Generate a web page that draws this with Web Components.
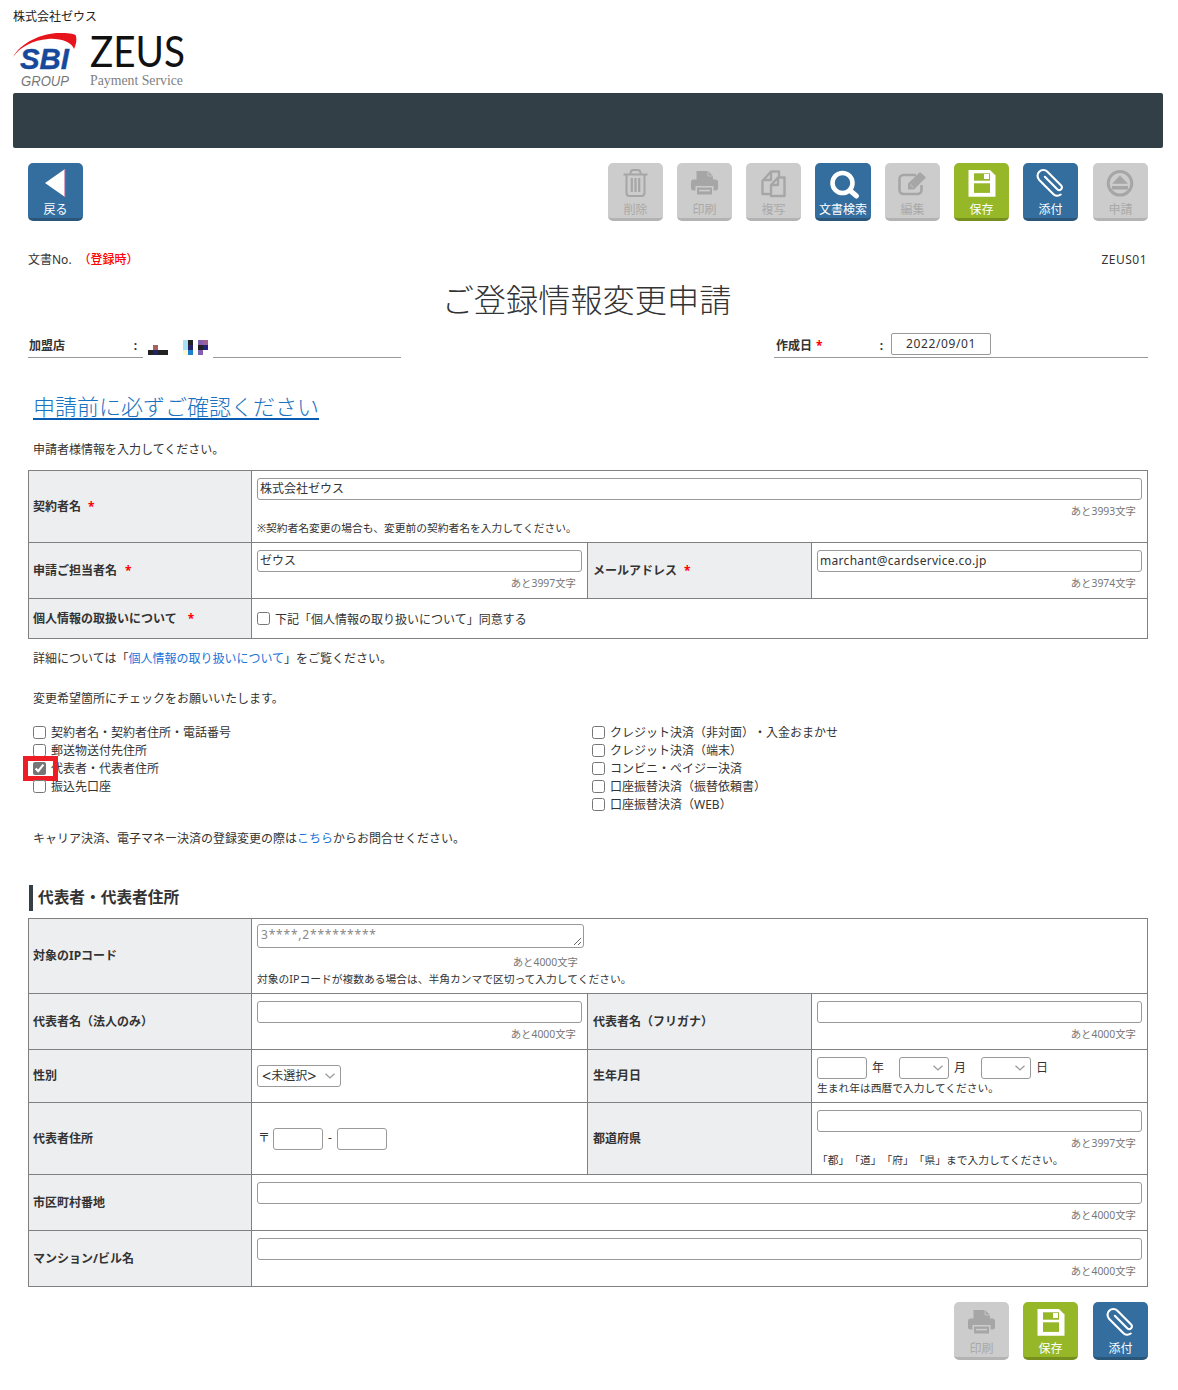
<!DOCTYPE html>
<html lang="ja">
<head>
<meta charset="utf-8">
<title>ご登録情報変更申請</title>
<style>
html,body{margin:0;padding:0;background:#fff}
body{font:12px/20px "Noto Sans","Noto Sans CJK JP",sans-serif;color:#333;width:1178px;overflow-x:hidden;text-spacing-trim:space-all}
a{color:#1a73d8;text-decoration:none}
.big{font-size:16px}
</style>
</head>
<body>
<z-header>株式会社ゼウス</z-header>

<z-toolbar style="margin-top:15px">
  <z-btn slot="start" icon="back" tone="blue">戻る</z-btn>
  <z-btn icon="trash">削除</z-btn>
  <z-btn icon="print">印刷</z-btn>
  <z-btn icon="copy">複写</z-btn>
  <z-btn icon="search" tone="blue" wide>文書検索</z-btn>
  <z-btn icon="edit">編集</z-btn>
  <z-btn icon="save" tone="green">保存</z-btn>
  <z-btn icon="clip" tone="blue">添付</z-btn>
  <z-btn icon="eject" nudge>申請</z-btn>
</z-toolbar>

<z-docmeta><span slot="no">文書No.</span><span slot="status">（登録時）</span><span slot="code">ZEUS01</span></z-docmeta>
<z-title>ご登録情報変更申請</z-title>
<z-meta><span slot="shop">加盟店</span><span slot="date">作成日</span><span slot="value">2022/09/01</span></z-meta>

<z-bigl>申請前に必ずご確認ください</z-bigl>
<z-p top="19">申請者様情報を入力してください。</z-p>

<z-table style="margin-top:11px">
  <z-row h="72">
    <z-th>契約者名<z-req gap="7"></z-req></z-th>
    <z-td span>
      <z-in>株式会社ゼウス</z-in>
      <z-count>あと3993文字</z-count>
      <z-note style="margin-top:3px">※契約者名変更の場合も、変更前の契約者名を入力してください。</z-note>
    </z-td>
  </z-row>
  <z-row h="56">
    <z-th>申請ご担当者名<z-req gap="8"></z-req></z-th>
    <z-td><z-in>ゼウス</z-in><z-count>あと3997文字</z-count></z-td>
    <z-th>メールアドレス<z-req gap="7"></z-req></z-th>
    <z-td><z-in style="letter-spacing:.3px">marchant@cardservice.co.jp</z-in><z-count>あと3974文字</z-count></z-td>
  </z-row>
  <z-row h="40" last>
    <z-th>個人情報の取扱いについて<z-req gap="11"></z-req></z-th>
    <z-td span center><z-check>下記「個人情報の取り扱いについて」同意する</z-check></z-td>
  </z-row>
</z-table>

<z-p top="9">詳細については「<a href="#">個人情報の取り扱いについて</a>」をご覧ください。</z-p>
<z-p top="20">変更希望箇所にチェックをお願いいたします。</z-p>

<z-checks>
  <z-check>契約者名・契約者住所・電話番号</z-check>
  <z-check>郵送物送付先住所</z-check>
  <z-check checked mark>代表者・代表者住所</z-check>
  <z-check>振込先口座</z-check>
  <z-check slot="right">クレジット決済（非対面）・入金おまかせ</z-check>
  <z-check slot="right">クレジット決済（端末）</z-check>
  <z-check slot="right">コンビニ・ペイジー決済</z-check>
  <z-check slot="right">口座振替決済（振替依頼書）</z-check>
  <z-check slot="right">口座振替決済（WEB）</z-check>
</z-checks>

<z-p top="15">キャリア決済、電子マネー決済の登録変更の際は<a href="#">こちら</a>からお問合せください。</z-p>

<z-heading>代表者・代表者住所</z-heading>

<z-table style="margin-top:7px">
  <z-row h="75">
    <z-th>対象のIPコード</z-th>
    <z-td span tight>
      <z-area>3****,2*********</z-area>
      <z-count style="width:327px;margin-top:7px">あと4000文字</z-count>
      <z-note style="margin-top:3px">対象のIPコードが複数ある場合は、半角カンマで区切って入力してください。</z-note>
    </z-td>
  </z-row>
  <z-row h="56">
    <z-th>代表者名（法人のみ）</z-th>
    <z-td><z-in></z-in><z-count>あと4000文字</z-count></z-td>
    <z-th>代表者名（フリガナ）</z-th>
    <z-td><z-in></z-in><z-count>あと4000文字</z-count></z-td>
  </z-row>
  <z-row h="53">
    <z-th>性別</z-th>
    <z-td center><z-sel w="84"><span class="big">&lt;</span>未選択<span class="big">&gt;</span></z-sel></z-td>
    <z-th>生年月日</z-th>
    <z-td>
      <z-inline>
        <z-in w="50"></z-in><z-unit after="15">年</z-unit>
        <z-sel w="50"></z-sel><z-unit after="15">月</z-unit>
        <z-sel w="50"></z-sel><z-unit>日</z-unit>
      </z-inline>
      <z-note style="margin-top:2px">生まれ年は西暦で入力してください。</z-note>
    </z-td>
  </z-row>
  <z-row h="72">
    <z-th>代表者住所</z-th>
    <z-td center>
      <z-inline>
        <z-unit first after="3">〒</z-unit><z-in w="50"></z-in><z-unit after="5">-</z-unit><z-in w="50"></z-in>
      </z-inline>
    </z-td>
    <z-th>都道府県</z-th>
    <z-td>
      <z-in></z-in><z-count>あと3997文字</z-count>
      <z-note style="margin-top:3px">「都」「道」「府」「県」まで入力してください。</z-note>
    </z-td>
  </z-row>
  <z-row h="56">
    <z-th>市区町村番地</z-th>
    <z-td span><z-in></z-in><z-count>あと4000文字</z-count></z-td>
  </z-row>
  <z-row h="56" last>
    <z-th>マンション/ビル名</z-th>
    <z-td span><z-in></z-in><z-count>あと4000文字</z-count></z-td>
  </z-row>
</z-table>

<z-toolbar style="margin-top:15px">
  <z-btn icon="print">印刷</z-btn>
  <z-btn icon="save" tone="green">保存</z-btn>
  <z-btn icon="clip" tone="blue" nudge>添付</z-btn>
</z-toolbar>

<script>
const el=(name,css,html)=>customElements.define(name,class extends HTMLElement{
  constructor(){super();this.attachShadow({mode:'open'}).innerHTML='<style>'+css+'</style>'+html;}
});

el('z-header',`
  :host{display:block;padding:0 15px 0 13px}
  .n{height:32px;line-height:33px;font-size:12px;color:#222}
  svg{display:block;margin-top:1px;overflow:visible}
  .bar{height:55px;background:#333f46;border-radius:2px}
`,`
  <div class="n"><slot></slot></div>
  <svg width="180" height="60" viewBox="13 33 180 60">
    <path d="M13 57C21 42 44 32 62 33C70 33 76 34 76 36C77 40 76 45 74 49C72 42 60 38 48 39C33 40 20 47 13 57Z" fill="#e8141c"/>
    <text x="20" y="69" font-family="Liberation Sans" font-weight="700" font-style="italic" font-size="30" fill="#16499b" stroke="#16499b" stroke-width=".4" textLength="49" lengthAdjust="spacingAndGlyphs">SBI</text>
    <text x="21" y="86" font-family="Liberation Sans" font-style="italic" font-size="15" fill="#777" textLength="48" lengthAdjust="spacingAndGlyphs">GROUP</text>
    <text x="90" y="67" font-family="Lato" font-size="43" fill="#111" textLength="95" lengthAdjust="spacingAndGlyphs">ZEUS</text>
    <text x="90" y="85" font-family="Liberation Serif" font-size="14.5" fill="#808080" textLength="93" lengthAdjust="spacingAndGlyphs">Payment Service</text>
  </svg>
  <div class="bar"></div>
`);

el('z-toolbar',`
  :host{display:flex;justify-content:space-between;padding:0 30px 0 28px}
  .r{display:flex;gap:14px;margin-left:auto}
`,`<slot name="start"></slot><div class="r"><slot></slot></div>`);

const ICONS={
 back:`<polygon points="17,20 37,6 37,34" fill="#fff"/><rect x="36.4" y="6" width="1" height="28" fill="#b5649a"/>`,
 trash:`<g fill="none" stroke="#a6a6a6" stroke-width="2"><path d="M15.5 11.5H39.5" stroke-width="2.2"/><path d="M22.5 11V9.5A3 3 0 0 1 25.5 7H29.5A3 3 0 0 1 32.5 9.5V11"/><path d="M18.5 12V30A3 3 0 0 0 21.5 33H33.5A3 3 0 0 0 36.5 30V12"/></g><g fill="#a6a6a6"><rect x="22.7" y="15" width="2.2" height="14"/><rect x="26.4" y="15" width="2.2" height="14"/><rect x="30.1" y="15" width="2.2" height="14"/></g>`,
 print:`<path d="M19.5 8H31L36 13V18H19.5Z" fill="#a6a6a6"/><path d="M31 8V13H36" fill="none" stroke="#ccc" stroke-width=".8"/><rect x="14" y="16.5" width="27" height="11" rx="2.5" fill="#a6a6a6"/><rect x="18.5" y="23" width="18" height="8.5" fill="#ccc"/><rect x="20" y="24.5" width="15" height="7" fill="#a6a6a6"/><rect x="22" y="26.8" width="11" height="1.6" fill="#ccc"/>`,
 copy:`<g fill="none" stroke="#a6a6a6" stroke-width="2.4" stroke-linejoin="round"><path d="M24 31H16.5V18L25 8.5H33V14"/><path d="M25 9V17H17"/><path d="M32 14.5H38.5V33H25V22L32 14.5Z"/><path d="M32 15V22H25.5"/></g>`,
 search:`<circle cx="26.5" cy="20" r="10" fill="none" stroke="#fff" stroke-width="4.6"/><path d="M34 27.5L40.5 33" stroke="#fff" stroke-width="5" stroke-linecap="round"/>`,
 edit:`<path d="M31 12H18.5A4 4 0 0 0 14.5 16V27A4 4 0 0 0 18.5 31H32.5A4 4 0 0 0 36.5 27V22" fill="none" stroke="#a6a6a6" stroke-width="2.6"/><path d="M23 20.5L35 9L41 14.5L29 26.5H23Z" fill="#a6a6a6"/><path d="M25.2 21.6L28.2 24.4" stroke="#ccc" stroke-width="1"/>`,
 save:`<path d="M14.5 7H36L41.5 12.5V33.7H14.5Z" fill="#fff"/><rect x="20" y="10.3" width="16" height="7.4" fill="#95b728"/><rect x="30" y="11" width="5" height="5" fill="#fff"/><rect x="20" y="20.3" width="16" height="9.6" fill="#95b728"/>`,
 clip:`<g transform="translate(27.8 20.3) rotate(-45) scale(.88) translate(0 -1)" fill="none" stroke="#fff" stroke-width="2.4" stroke-linecap="round"><path d="M.4 -9V11A3.1 3.1 0 0 0 6.6 11V-11A6.6 6.6 0 0 0 -6.6 -11V11.5A6.6 6.6 0 0 0 -1 18"/></g>`,
 eject:`<circle cx="27" cy="20.3" r="11.8" fill="none" stroke="#a6a6a6" stroke-width="3"/><polygon points="27,12.5 19,20.8 35,20.8" fill="#a6a6a6"/><rect x="19" y="23" width="16" height="3.5" fill="#a6a6a6"/>`
};
customElements.define('z-btn',class extends HTMLElement{
  constructor(){super();this.attachShadow({mode:'open'});}
  connectedCallback(){
    const i=this.getAttribute('icon');
    this.shadowRoot.innerHTML=`<style>
      :host{display:flex;flex-direction:column;align-items:center;box-sizing:border-box;width:55px;height:58px;border-radius:5px;
        background:#ccc;border-bottom:3px solid #b3b3b3;color:#a9a9a9;overflow:hidden;font-size:12px;line-height:14px}
      :host([tone=blue]){background:#346e9f;border-bottom-color:#2a5679;color:#fff}
      :host([tone=green]){background:#95b728;border-bottom-color:#75901e;color:#fff}
      :host([wide]){width:56px}
      :host([nudge]){margin-left:1px}
      svg{display:block;flex:none}
      .t{white-space:nowrap}
    </style><svg width="55" height="40" viewBox="0 0 55 40">${ICONS[i]}</svg><span class="t"><slot></slot></span>`;
  }
});

el('z-docmeta',`
  :host{display:flex;justify-content:space-between;padding:0 31px 0 28px;margin-top:29px;height:20px;line-height:20px;font-size:12px}
  .s{color:#f00;font-weight:500;margin-left:7px}
  .c{letter-spacing:.5px}
`,`<div><slot name="no"></slot><span class="s"><slot name="status"></slot></span></div><span class="c"><slot name="code"></slot></span>`);

el('z-title',`
  :host{display:block;margin:6px 33px 0 28px;height:44px;line-height:44px;text-align:center;font-size:32.2px;font-weight:300;color:#333;font-family:"Noto Sans CJK JP",sans-serif}
`,`<slot></slot>`);

el('z-meta',`
  :host{display:flex;justify-content:space-between;align-items:flex-end;margin:13px 30px 0 28px;height:25px;font-size:12px}
  .l{display:flex;align-items:flex-end}
  .u{box-sizing:border-box;border-bottom:1px solid #999;height:25px;display:flex;align-items:flex-end;justify-content:space-between;line-height:22px;font-weight:700;padding-left:1px}
  .c{padding-right:6px}
  svg{display:block;margin:0 5px 3px}
  .req{color:#f00;margin-left:4px}
  .box{box-sizing:border-box;width:100px;height:22px;border:1px solid #999;border-radius:2px;margin-bottom:2px;line-height:20px;text-align:center;font-weight:400;letter-spacing:.6px}
  .d{width:374px}
  .d .c{padding:0}
`,`
  <div class="l">
    <div class="u" style="width:115px"><span><slot name="shop"></slot></span><span class="c">:</span></div>
    <svg width="60" height="15" viewBox="0 0 60 15" shape-rendering="crispEdges">
      <rect x="5" y="5" width="5" height="5" fill="#a86060"/><rect x="0" y="10" width="20" height="5" fill="#222"/><rect x="5" y="10" width="5" height="5" fill="#222266"/>
      <rect x="35" y="0" width="5" height="10" fill="#a8e0f8"/><rect x="35" y="10" width="5" height="5" fill="#fdf8d0"/>
      <rect x="40" y="0" width="5" height="5" fill="#222"/><rect x="40" y="5" width="5" height="5" fill="#222266"/><rect x="40" y="10" width="5" height="5" fill="#1c80d0"/>
      <rect x="50" y="0" width="5" height="5" fill="#8060b0"/><rect x="50" y="5" width="5" height="5" fill="#222"/><rect x="50" y="10" width="5" height="5" fill="#8060b0"/>
      <rect x="55" y="0" width="5" height="5" fill="#a06090"/><rect x="55" y="5" width="5" height="5" fill="#202080"/>
    </svg>
    <div class="u" style="width:188px"></div>
  </div>
  <div class="u d">
    <span style="padding-left:1px"><slot name="date"></slot><span class="req">*</span></span>
    <span style="display:flex;align-items:flex-end;gap:8px"><span class="c">:</span><span class="box"><slot name="value"></slot></span><span style="width:149px"></span></span>
  </div>
`);

el('z-bigl',`
  :host{display:block;margin:32px 0 0 33px;height:30px;line-height:30px;font-size:22px;color:#1a73c0;font-weight:300;font-family:"Noto Sans CJK JP",sans-serif}
  a{color:inherit;text-decoration:none;border-bottom:2px solid #0a5cb0;display:inline-block;line-height:26px}
`,`<a href="#"><slot></slot></a>`);

customElements.define('z-p',class extends HTMLElement{
  constructor(){super();this.attachShadow({mode:'open'}).innerHTML=`<style>
    :host{display:block;padding-left:33px;height:20px;line-height:22px;font-size:12px;color:#333}
  </style><slot></slot>`;}
  connectedCallback(){this.style.marginTop=(this.getAttribute('top')||0)+'px';}
});

el('z-table',`
  :host{display:block;margin-left:28px;width:1120px;box-sizing:border-box;border:1px solid #808080;border-bottom:0}
`,`<slot></slot>`);

customElements.define('z-row',class extends HTMLElement{
  constructor(){super();this.attachShadow({mode:'open'}).innerHTML=`<style>
    :host{display:grid;grid-template-columns:223px 336px 224px 1fr;box-sizing:border-box;border-bottom:1px solid #808080}
  </style><slot></slot>`;}
  connectedCallback(){this.style.height=this.getAttribute('h')+'px';}
});

el('z-th',`
  :host{display:flex;align-items:center;box-sizing:border-box;background:#edeef0;border-right:1px solid #808080;padding-left:4px;font-weight:700;font-size:12px;color:#333;white-space:nowrap}
  :host(:nth-child(3)){padding-left:5px}
`,`<slot></slot>`);

el('z-td',`
  :host{display:flex;flex-direction:column;box-sizing:border-box;border-right:1px solid #808080;padding:7px 5px 0;min-width:0}
  :host(:last-child){border-right:0}
  :host([span]){grid-column:span 3}
  :host([tight]){padding-top:5px}
  :host([center]){justify-content:center;padding-top:0}
`,`<slot></slot>`);

customElements.define('z-req',class extends HTMLElement{
  constructor(){super();this.attachShadow({mode:'open'}).innerHTML=`<style>
    :host{display:inline;color:#f00;font-weight:700}
  </style>*`;}
  connectedCallback(){this.style.marginLeft=this.getAttribute('gap')+'px';}
});

customElements.define('z-in',class extends HTMLElement{
  constructor(){super();this.attachShadow({mode:'open'}).innerHTML=`<style>
    :host{display:block;box-sizing:border-box;height:22px;flex:none;border:1px solid #999;border-radius:3px;padding-left:2px;line-height:20px;font-size:12px;color:#333;background:#fff;white-space:nowrap;overflow:hidden}
  </style><slot></slot>`;}
  connectedCallback(){const w=this.getAttribute('w');if(w)this.style.width=w+'px';}
});

el('z-area',`
  :host{display:block;position:relative;box-sizing:border-box;width:327px;height:24px;border:1px solid #999;border-radius:3px;padding-left:3px;line-height:20px;font-size:12px;color:#888;letter-spacing:.8px}
  svg{position:absolute;right:1px;bottom:1px}
`,`<slot></slot><svg width="9" height="9" viewBox="0 0 9 9"><path d="M1 8L8 1M5 8L8 5" stroke="#666" stroke-width="1" fill="none"/></svg>`);

el('z-count',`
  :host{display:block;box-sizing:border-box;height:14px;line-height:14px;margin-top:4px;padding-right:6px;text-align:right;font-size:10.4px;color:#777;white-space:nowrap}
`,`<slot></slot>`);

el('z-note',`
  :host{display:block;height:14px;line-height:14px;font-size:10.75px;color:#333;white-space:nowrap}
`,`<slot></slot>`);

customElements.define('z-check',class extends HTMLElement{
  constructor(){super();this.attachShadow({mode:'open'});}
  connectedCallback(){
    this.shadowRoot.innerHTML=`<style>
      :host{display:flex;align-items:center;gap:5px;position:relative;height:18px;line-height:18px;font-size:12px;color:#333;white-space:nowrap}
      input{margin:0;width:13px;height:13px;flex:none;accent-color:#767676}
      .t{padding-top:2px}
      .m{position:absolute;left:-10px;top:-3px;box-sizing:border-box;width:35px;height:25px;border:5px solid #ee1c25;pointer-events:none}
    </style><input type="checkbox" ${this.hasAttribute('checked')?'checked':''} tabindex="-1"><span class="t"><slot></slot></span>${this.hasAttribute('mark')?'<span class="m"></span>':''}`;
  }
});

el('z-checks',`
  :host{display:grid;grid-template-columns:559px 1fr;margin:15px 0 0 33px;height:90px}
`,`<div><slot></slot></div><div><slot name="right"></slot></div>`);

el('z-heading',`
  :host{display:block;box-sizing:border-box;margin:37px 0 0 29px;height:26px;line-height:24px;border-left:4px solid #333f46;padding-left:5px;font-size:15.7px;font-weight:700;color:#333}
`,`<slot></slot>`);

customElements.define('z-sel',class extends HTMLElement{
  constructor(){super();this.attachShadow({mode:'open'}).innerHTML=`<style>
    :host{display:flex;align-items:center;box-sizing:border-box;height:22px;flex:none;border:1px solid #999;border-radius:3px;padding-left:4px;font-size:12px;line-height:20px;color:#333;position:relative;white-space:nowrap}
    svg{position:absolute;right:5px;top:7px}
  </style><slot></slot><svg width="10" height="6" viewBox="0 0 10 6"><path d="M.5 .7L5 5L9.5 .7" fill="none" stroke="#999" stroke-width="1.2"/></svg>`;}
  connectedCallback(){this.style.width=this.getAttribute('w')+'px';}
});

el('z-inline',`
  :host{display:flex;align-items:center;height:22px;flex:none}
`,`<slot></slot>`);

customElements.define('z-unit',class extends HTMLElement{
  constructor(){super();this.attachShadow({mode:'open'}).innerHTML=`<style>
    :host{display:block;margin-left:5px;font-size:12px;color:#333;line-height:20px;margin-top:-1px}
    :host([first]){margin-left:1px}
  </style><slot></slot>`;}
  connectedCallback(){const a=this.getAttribute('after');if(a)this.style.marginRight=a+'px';}
});
</script>
</body>
</html>
